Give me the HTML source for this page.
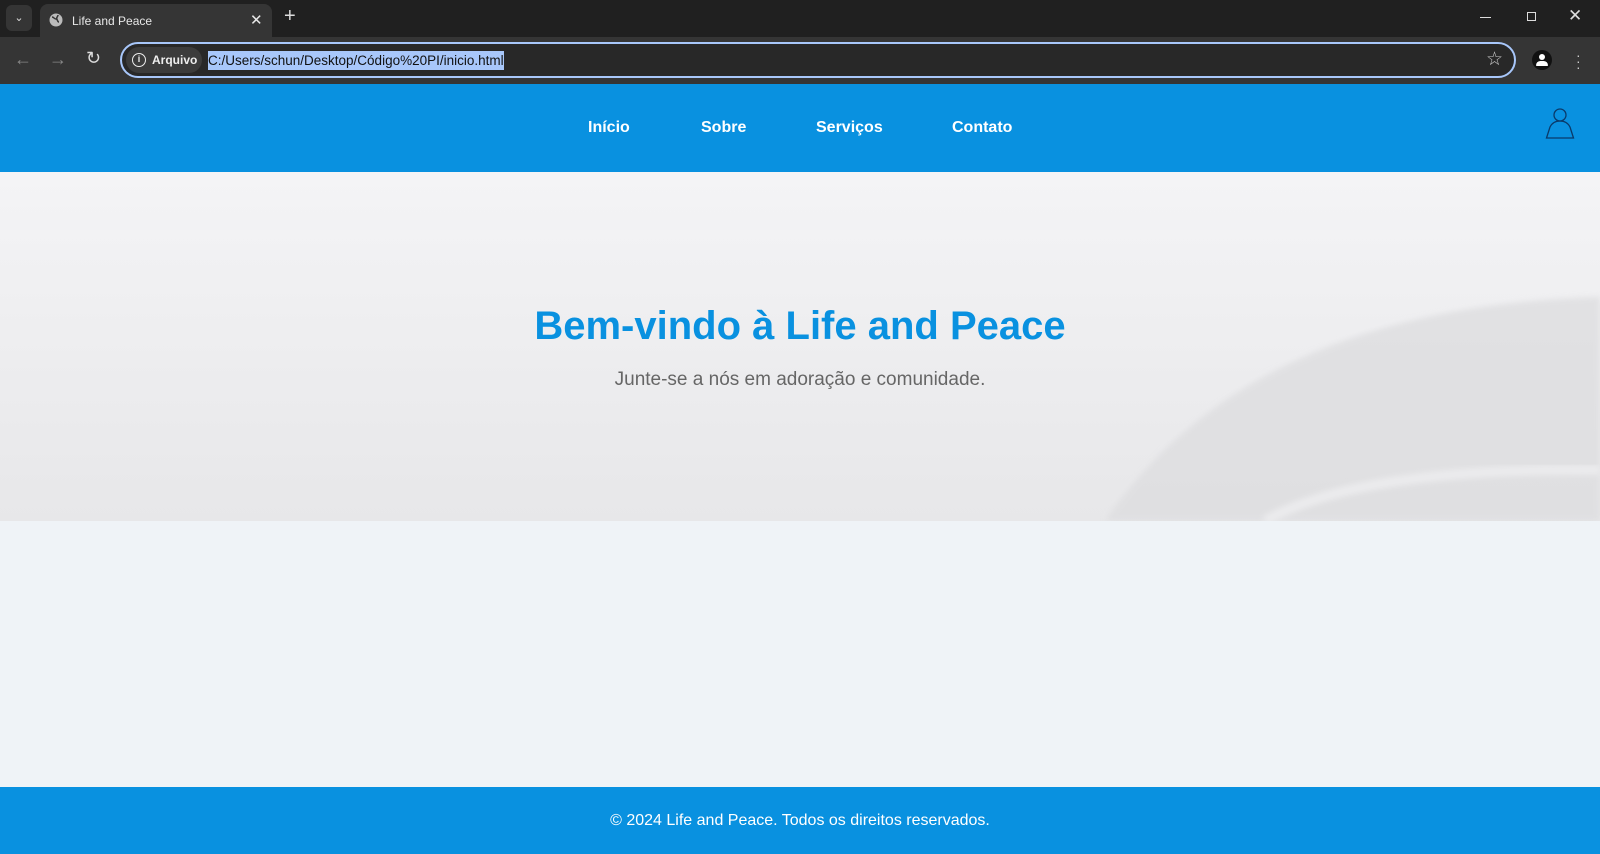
<!DOCTYPE html>
<html><head><meta charset="utf-8"><style>
*{margin:0;padding:0;box-sizing:border-box}
body{width:1600px;height:854px;overflow:hidden;background:#eff3f7;font-family:"Liberation Sans",Arial,sans-serif;position:relative}
.tabbar{position:absolute;left:0;top:0;width:1600px;height:37px;background:#202020}
.toolbar{position:absolute;left:0;top:37px;width:1600px;height:47px;background:#353535}
.tab{position:absolute;left:40px;top:4px;width:232px;height:33px;background:#353535;border-radius:8px 8px 0 0;color:#e8e8e8;font-size:12px}
.omni{position:absolute;left:120px;top:42px;width:1396px;height:36px;border:2px solid #a8c7fa;border-radius:18px;background:#282828}
.header{position:absolute;left:0;top:84px;width:1600px;height:88px;background:#0991e0}
.nav a{position:absolute;top:119px;color:#fff;font-weight:bold;font-size:16px;text-decoration:none}
.hero{position:absolute;left:0;top:172px;width:1600px;height:349px;background:linear-gradient(#f4f4f6,#e7e7e9);overflow:hidden}
h1{position:absolute;left:0;width:1600px;top:132px;text-align:center;color:#0991e0;font-size:40px;font-weight:bold}
.sub{position:absolute;left:0;width:1600px;top:197px;text-align:center;color:#666;font-size:19px}
.footer{position:absolute;left:0;top:787px;width:1600px;height:67px;background:#0991e0;color:#fff;font-size:16px;text-align:center;line-height:67px}
</style></head><body>
<div class="tabbar">
<div style="position:absolute;left:6px;top:5px;width:26px;height:26px;background:#353535;border-radius:6px;color:#ddd;font-size:11px;text-align:center;line-height:26px">⌄</div>
<div class="tab"><svg style="position:absolute;left:9px;top:9px" width="14" height="14" viewBox="0 0 14 14"><circle cx="7" cy="7" r="6.5" fill="#bbb"/><path d="M3 4c2 0 2 2 4 2s1 3 3 3M9 2c0 2-2 2-1 4" stroke="#353535" stroke-width="1.5" fill="none"/></svg><span style="position:absolute;left:32px;top:10px">Life and Peace</span><span style="position:absolute;left:210px;top:7px;font-size:15px">✕</span></div>
<span style="position:absolute;left:284px;top:5px;color:#ddd;font-size:20px">+</span>
<div style="position:absolute;left:1480px;top:17px;width:11px;height:1px;background:#ddd"></div>
<div style="position:absolute;left:1527px;top:12px;width:9px;height:9px;border:1px solid #ddd"></div>
<span style="position:absolute;left:1568px;top:6px;color:#ddd;font-size:17px">✕</span>
</div>
<div class="toolbar">
<span style="position:absolute;left:14px;top:12px;color:#888;font-size:18px">←</span>
<span style="position:absolute;left:49px;top:12px;color:#888;font-size:18px">→</span>
<span style="position:absolute;left:86px;top:11px;color:#ddd;font-size:18px">↻</span>
</div>
<div class="omni">
<div style="position:absolute;left:4px;top:3px;width:76px;height:26px;background:#3c3c3c;border-radius:13px;color:#eee;font-size:12px;font-weight:bold;line-height:26px;padding-left:26px">Arquivo<span style="position:absolute;left:6px;top:6px;width:14px;height:14px;border:1.5px solid #eee;border-radius:50%;font-size:9px;line-height:11px;text-align:center">i</span></div>
<span style="position:absolute;left:86px;top:7px;background:#a8c7fa;color:#111;font-size:13.5px;padding:1px 0;line-height:17px">C:/Users/schun/Desktop/Código%20PI/inicio.html</span>
<span style="position:absolute;left:1364px;top:4px;color:#ccc;font-size:19px">☆</span>
</div>
<div style="position:absolute;left:1532px;top:50px;width:20px;height:20px;border-radius:50%;background:#111"><div style="position:absolute;left:7px;top:4px;width:6px;height:6px;background:#fff;border-radius:50%"></div><div style="position:absolute;left:4px;top:11px;width:12px;height:5px;background:#fff;border-radius:6px 6px 1px 1px"></div></div>
<div style="position:absolute;left:1576px;top:52px;color:#ccc;font-size:14px;line-height:6px">·<br>·<br>·</div>
<div class="header"></div>
<div class="nav"><a style="left:588px">Início</a><a style="left:701px">Sobre</a><a style="left:816px">Serviços</a><a style="left:952px">Contato</a></div>
<svg style="position:absolute;left:1545px;top:107px" width="30" height="33" viewBox="0 0 30 33"><circle cx="15" cy="8" r="6" fill="none" stroke="#0a3a6a" stroke-width="1.3"/><path d="M1.5 31 L5 20 Q8 14 15 14 Q22 14 25 20 L28.5 31 Z" fill="none" stroke="#0a3a6a" stroke-width="1.3"/></svg>
<div class="hero">
<svg style="position:absolute;left:0;top:0" width="1600" height="349"><defs><filter id="b"><feGaussianBlur stdDeviation="3"/></filter></defs><path d="M1105 349 Q1250 135 1600 125 L1600 349Z" fill="#dedee0" opacity=".8" filter="url(#b)"/><path d="M1265 349 Q1360 295 1600 298" stroke="#ebebed" stroke-width="10" fill="none" filter="url(#b)"/></svg>
<h1>Bem-vindo à Life and Peace</h1>
<div class="sub">Junte-se a nós em adoração e comunidade.</div>
</div>
<div class="footer">© 2024 Life and Peace. Todos os direitos reservados.</div>
</body></html>
